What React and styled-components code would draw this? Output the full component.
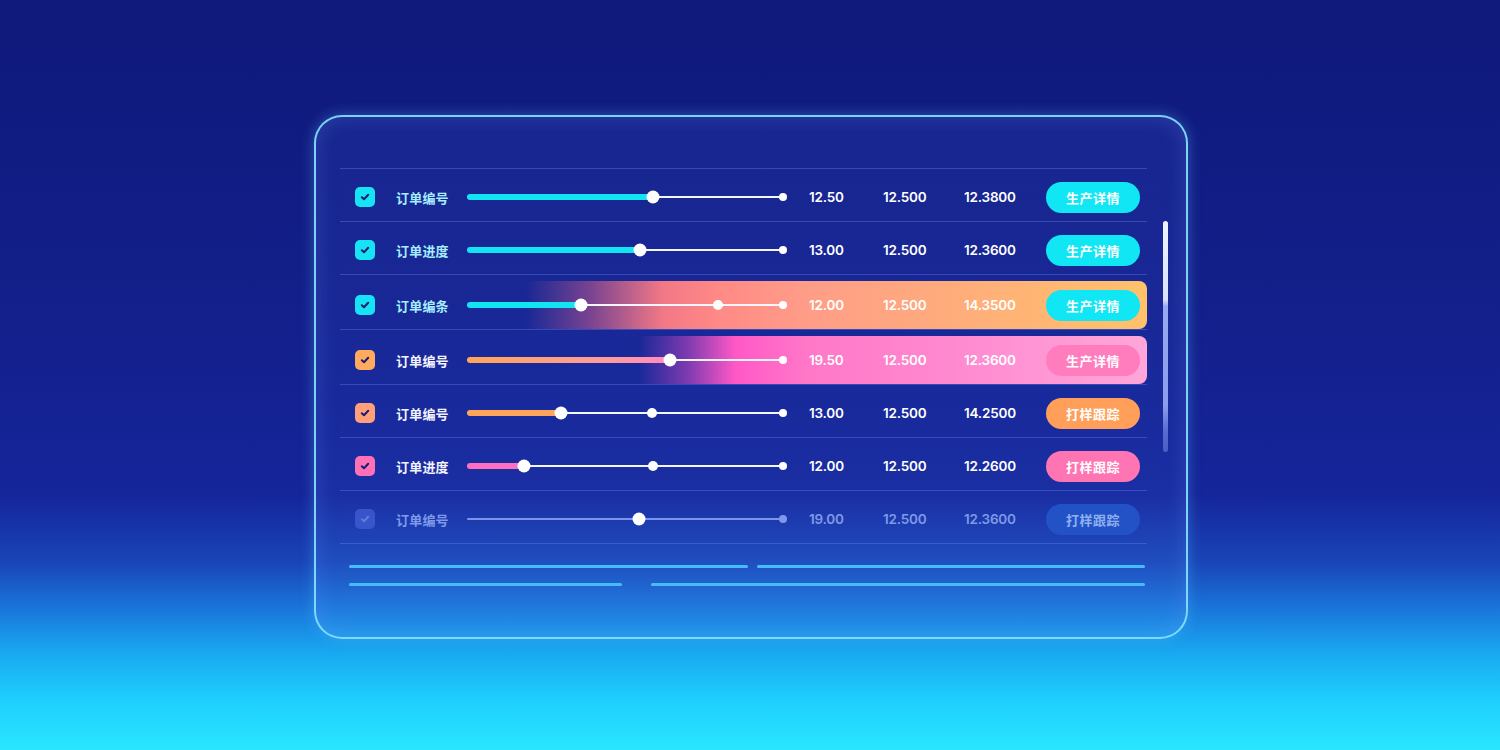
import React from "react";
import styled, { createGlobalStyle, css } from "styled-components";

const Global = createGlobalStyle`
  * { box-sizing: border-box; }
  html, body { margin: 0; padding: 0; }
  body {
    width: 1500px;
    height: 750px;
    overflow: hidden;
    font-family: "Inter", "Noto Sans CJK SC", sans-serif;
    background: linear-gradient(180deg,
      #0f197b 0%,
      #131f8a 40%,
      #15259a 66%,
      #1945b8 75%,
      #1a74da 81%,
      #19a8f0 87%,
      #1ecdfd 93%,
      #2ae6ff 100%);
  }
`;

const Page = styled.div`
  width: 1500px;
  height: 750px;
  display: flex;
  align-items: center;
  justify-content: center;
  padding-top: 4px;
  padding-left: 2px;
`;

const Panel = styled.section`
  width: 874px;
  height: 524px;
  border: 2px solid rgba(135, 225, 255, 0.92);
  border-radius: 28px;
  padding: 51px 18px 0 24px;
  background: linear-gradient(180deg, rgba(70, 100, 230, 0.14) 0%, rgba(70, 110, 240, 0.1) 60%, rgba(90, 170, 255, 0.12) 100%);
  box-shadow: 0 0 14px rgba(90, 200, 255, 0.35), inset 0 0 22px rgba(120, 170, 255, 0.22);
  display: flex;
  gap: 16px;
`;

const Main = styled.div`
  width: 807px;
  display: flex;
  flex-direction: column;
`;

const Table = styled.div`
  border-top: 1px solid rgba(110, 140, 255, 0.35);
`;

const Row = styled.div`
  border-bottom: 1px solid rgba(110, 140, 255, 0.35);
  padding-top: ${(p) => (p.$hl ? "6px" : "0")};
`;

const highlights = {
  orange: css`
    background: linear-gradient(90deg,
      rgba(255, 120, 120, 0) 0%,
      rgba(255, 120, 120, 0) 23%,
      rgba(200, 90, 140, 0.55) 31%,
      #f27886 40%,
      #ff8a86 47%,
      #ff9d88 58%,
      #ffae7a 78%,
      #ffc26a 100%);
  `,
  pink: css`
    background: linear-gradient(90deg,
      rgba(255, 80, 200, 0) 0%,
      rgba(255, 80, 200, 0) 37%,
      rgba(190, 70, 190, 0.6) 43%,
      #ff58c6 49%,
      #ff78c8 58%,
      #ff88cf 75%,
      #ffa6da 100%);
  `,
};

const RowBody = styled.div`
  height: ${(p) => (p.$hl ? "48px" : "52px")};
  padding-top: ${(p) => (p.$hl ? "0" : "4px")};
  border-radius: 8px;
  padding-left: 15px;
  display: grid;
  grid-template-columns: 41px 71px 342px 74px 81px 82px 94px;
  align-items: center;
  ${(p) => p.$hl && highlights[p.$hl]}
`;

const tones = {
  cyan: { box: "#16e3f4", label: "#a6eeff", fill: "#12e4f2", btn: "#10e6f4", btnText: "#ffffff", num: "#ffffff" },
  orange: { box: "#ffaa5e", label: "#f4f4ff", fill: "linear-gradient(90deg, #ffa657, #ff9a9e 70%, #ff8cc0)", btn: "#ff9f5a", btnText: "#ffffff", num: "#ffffff" },
  salmon: { box: "#ffa07a", label: "#f4f4ff", fill: "#ffa458", btn: "#ff9f5a", btnText: "#ffffff", num: "#ffffff" },
  pink: { box: "#ff70b6", label: "#f4f4ff", fill: "#ff6fbf", btn: "#ff74b3", btnText: "#ffffff", num: "#ffffff" },
  hotpink: { box: "#ff70b6", label: "#f4f4ff", fill: "#ff6fbf", btn: "#ff7cbd", btnText: "#ffffff", num: "#ffffff" },
  faded: { box: "#3f5ad0", label: "#7e9ae8", fill: "transparent", btn: "#2352c6", btnText: "#8fb0f0", num: "#7f9ae6" },
};

const CheckBox = styled.div`
  width: 20px;
  height: 20px;
  border-radius: 5px;
  background: ${(p) => p.$color};
  display: flex;
  align-items: center;
  justify-content: center;
  opacity: ${(p) => (p.$faded ? 0.85 : 1)};
`;

const Label = styled.span`
  font-family: "Noto Sans CJK SC", sans-serif;
  font-size: 13px;
  font-weight: 700;
  letter-spacing: 0.2px;
  color: ${(p) => p.$color};
`;

const Slider = styled.div`
  position: relative;
  width: 316px;
  height: 14px;
`;

const Line = styled.div`
  position: absolute;
  left: 0;
  right: 0;
  top: 6px;
  height: 2px;
  border-radius: 1px;
  background: ${(p) => (p.$faded ? "rgba(140, 165, 245, 0.85)" : "#f4f6ff")};
`;

const Fill = styled.div`
  position: absolute;
  left: 0;
  top: 4px;
  height: 6px;
  border-radius: 3px;
  background: ${(p) => p.$bg};
`;

const Dot = styled.div`
  position: absolute;
  top: 50%;
  width: ${(p) => p.$size}px;
  height: ${(p) => p.$size}px;
  border-radius: 50%;
  transform: translate(-50%, -50%);
  background: ${(p) => p.$color || "#ffffff"};
`;

const Num = styled.span`
  font-family: "Inter", sans-serif;
  font-size: 13.5px;
  font-weight: 600;
  letter-spacing: -0.2px;
  color: ${(p) => p.$color};
`;

const Button = styled.button`
  width: 94px;
  height: 31px;
  border: none;
  border-radius: 16px;
  background: ${(p) => p.$bg};
  color: ${(p) => p.$color};
  font-family: "Noto Sans CJK SC", sans-serif;
  font-size: 13px;
  font-weight: 700;
  letter-spacing: 0.5px;
  padding: 0;
  display: flex;
  align-items: center;
  justify-content: center;
`;

const Footer = styled.div`
  padding: 21px 2px 0 9px;
  display: flex;
  flex-direction: column;
  gap: 15px;
`;

const LineRow = styled.div`
  display: flex;
  gap: ${(p) => p.$gap}px;
`;

const Bar = styled.div`
  height: 3px;
  border-radius: 2px;
  background: #48c2ff;
  width: ${(p) => (p.$w ? `${p.$w}px` : "auto")};
  flex: ${(p) => (p.$w ? "none" : "1")};
  opacity: 0.95;
`;

const ScrollTrack = styled.div`
  width: 5px;
  height: 231px;
  margin-top: 53px;
  border-radius: 3px;
  background: linear-gradient(180deg,
    #eef3ff 0%,
    #d8e2ff 34%,
    #98aaf0 37%,
    #8a9cec 80%,
    #5b6ed2 90%,
    #4a5cc4 100%);
`;

const Check = ({ color }) => (
  <svg width="12" height="12" viewBox="0 0 12 12">
    <path d="M2.8 6.2 L5 8.3 L9.2 3.8" fill="none" stroke={color} strokeWidth="2" strokeLinecap="round" strokeLinejoin="round" />
  </svg>
);

const rows = [
  { label: "订单编号", tone: "cyan", pct: 58.9, mid: null, v: ["12.50", "12.500", "12.3800"], btn: "生产详情" },
  { label: "订单进度", tone: "cyan", pct: 54.7, mid: null, v: ["13.00", "12.500", "12.3600"], btn: "生产详情" },
  { label: "订单编条", tone: "cyan", pct: 36.1, mid: 79.4, v: ["12.00", "12.500", "14.3500"], btn: "生产详情", hl: "orange" },
  { label: "订单编号", tone: "orange", pct: 64.2, mid: null, v: ["19.50", "12.500", "12.3600"], btn: "生产详情", hl: "pink", btnTone: "hotpink" },
  { label: "订单编号", tone: "salmon", pct: 29.7, mid: 58.5, v: ["13.00", "12.500", "14.2500"], btn: "打样跟踪" },
  { label: "订单进度", tone: "pink", pct: 18.0, mid: 58.9, v: ["12.00", "12.500", "12.2600"], btn: "打样跟踪" },
  { label: "订单编号", tone: "faded", pct: 54.4, mid: null, v: ["19.00", "12.500", "12.3600"], btn: "打样跟踪", noFill: true },
];

export default function App() {
  return (
    <>
      <Global />
      <Page>
        <Panel>
          <Main>
            <Table>
              {rows.map((r, i) => {
                const t = tones[r.tone];
                const bt = tones[r.btnTone || r.tone];
                const faded = r.tone === "faded";
                return (
                  <Row key={i} $hl={r.hl}>
                    <RowBody $hl={r.hl}>
                      <CheckBox $color={t.box} $faded={faded}>
                        <Check color={faded ? "#6f88e8" : "#1b1f70"} />
                      </CheckBox>
                      <Label $color={t.label}>{r.label}</Label>
                      <Slider>
                        <Line $faded={faded} />
                        {!r.noFill && <Fill $bg={t.fill} style={{ width: `${r.pct}%` }} />}
                        {r.mid != null && <Dot $size={10} style={{ left: `${r.mid}%` }} />}
                        <Dot $size={8} $color={faded ? "#8197e8" : "#ffffff"} style={{ left: "100%" }} />
                        <Dot $size={13} style={{ left: `${r.pct}%` }} />
                      </Slider>
                      <Num $color={t.num}>{r.v[0]}</Num>
                      <Num $color={t.num}>{r.v[1]}</Num>
                      <Num $color={t.num}>{r.v[2]}</Num>
                      <Button $bg={bt.btn} $color={bt.btnText}>{r.btn}</Button>
                    </RowBody>
                  </Row>
                );
              })}
            </Table>
            <Footer>
              <LineRow $gap={9}>
                <Bar $w={399} />
                <Bar />
              </LineRow>
              <LineRow $gap={29}>
                <Bar $w={273} />
                <Bar />
              </LineRow>
            </Footer>
          </Main>
          <ScrollTrack />
        </Panel>
      </Page>
    </>
  );
}
